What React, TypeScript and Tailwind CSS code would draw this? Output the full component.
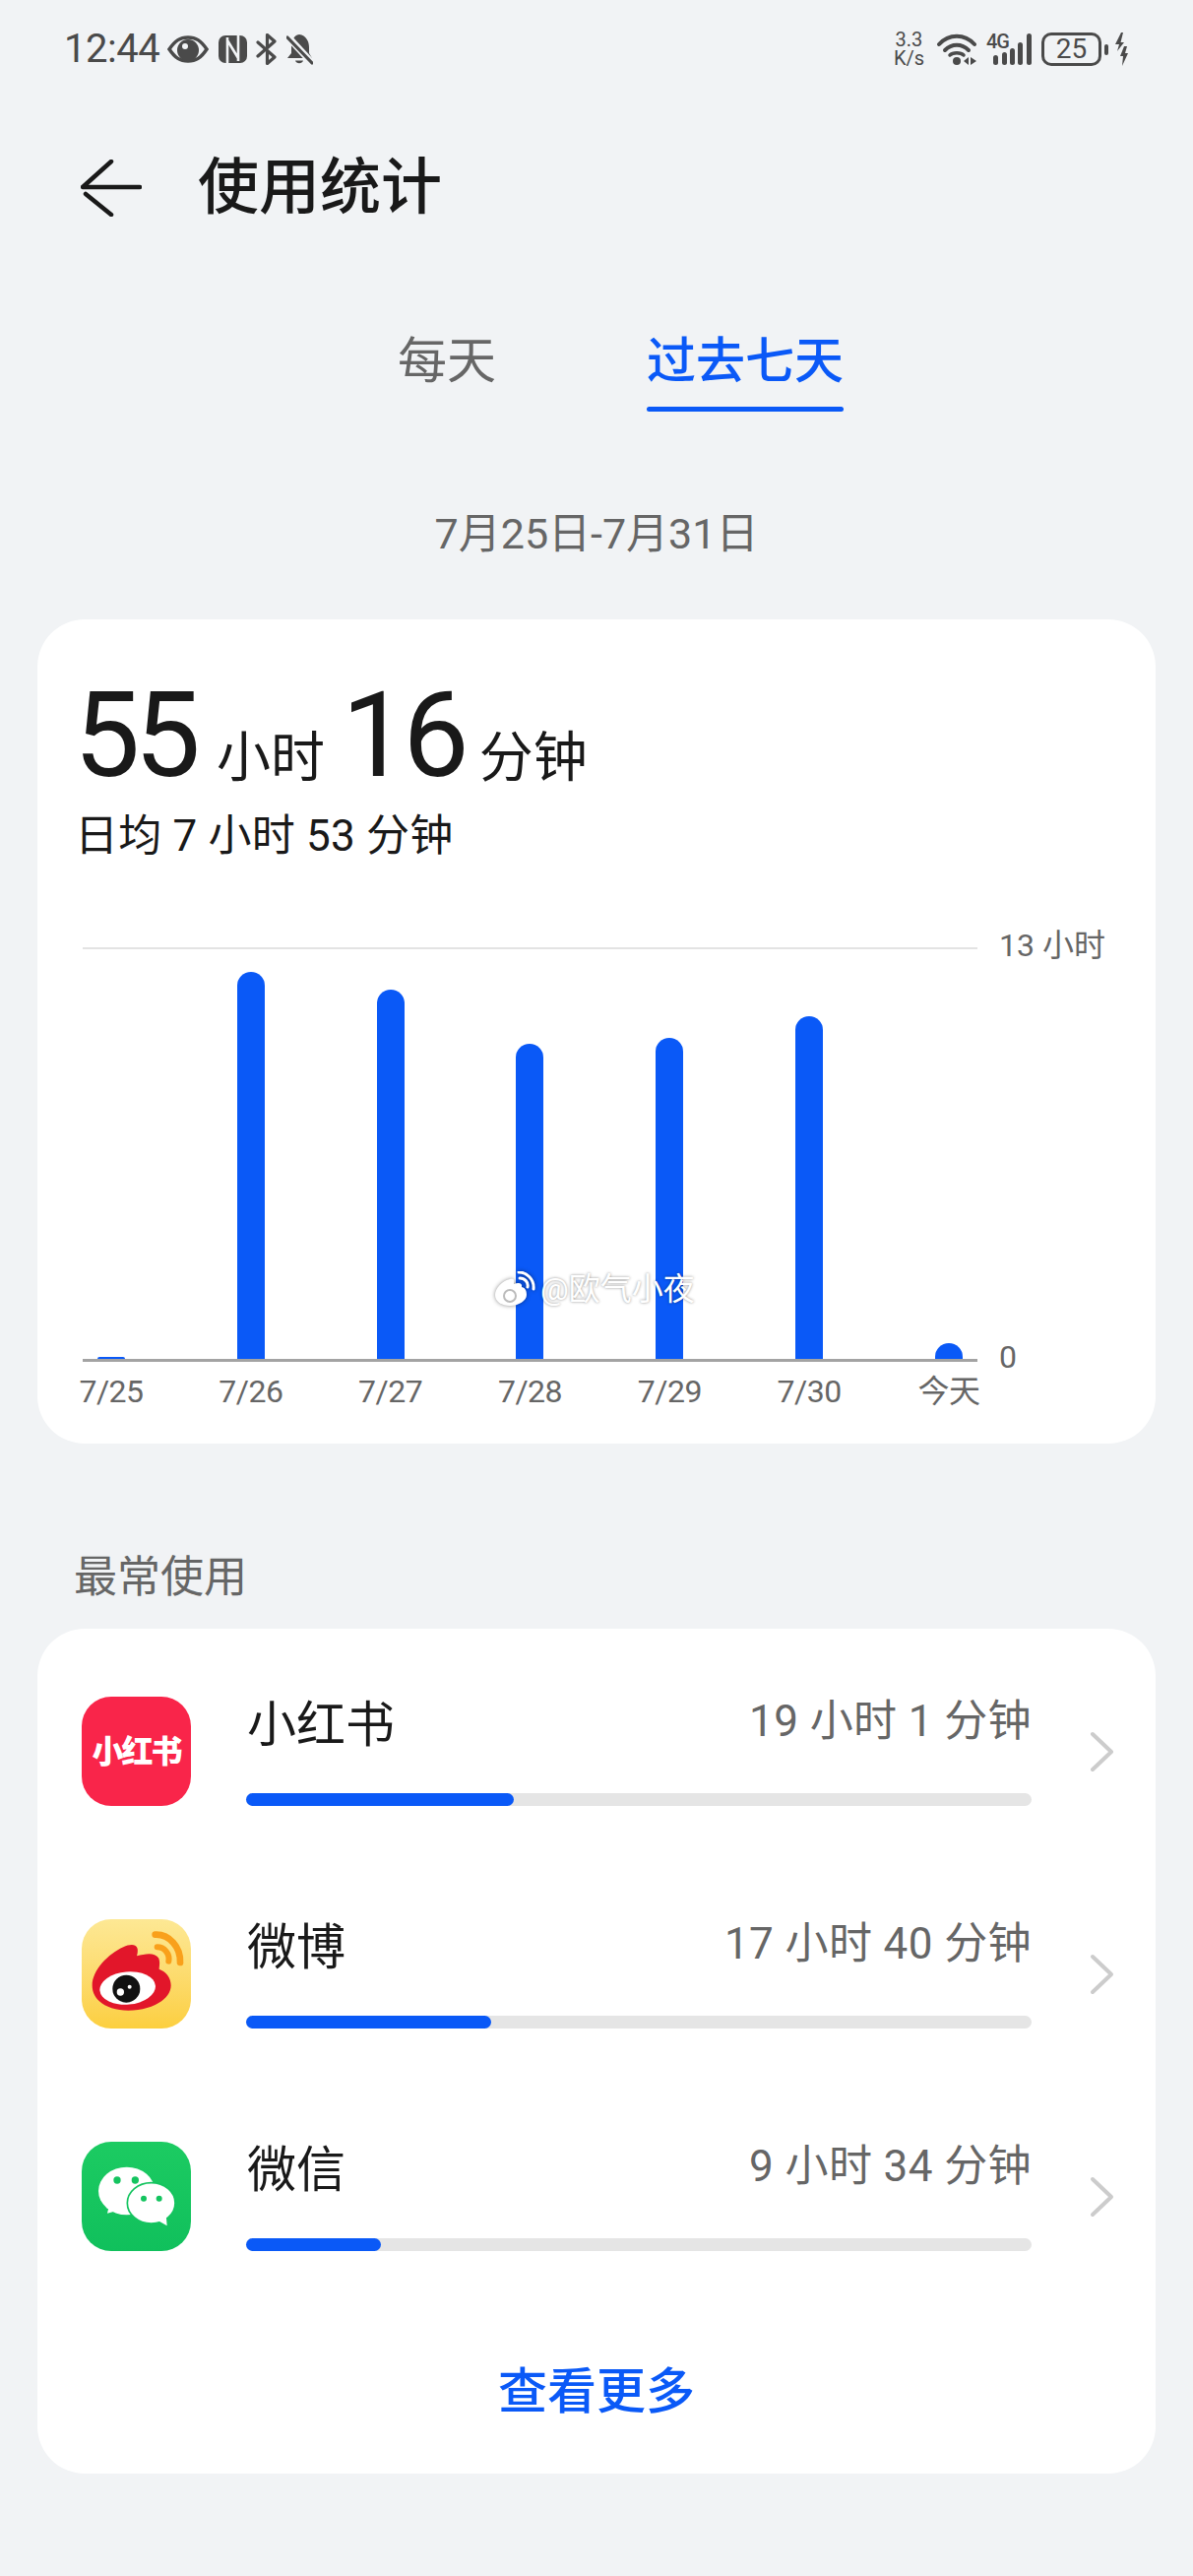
const bars = [
  { label: '7/25', height: 2 },
  { label: '7/26', height: 393 },
  { label: '7/27', height: 375 },
  { label: '7/28', height: 320 },
  { label: '7/29', height: 326 },
  { label: '7/30', height: 348 },
  { label: '今天', height: 16 },
];

const apps = [
  { name: '小红书', time: '19 小时 1 分钟', width: 272, icon: <RedBookIcon /> },
  { name: '微博', time: '17 小时 40 分钟', width: 249, icon: <WeiboIcon /> },
  { name: '微信', time: '9 小时 34 分钟', width: 137, icon: <WechatIcon /> },
];

function RedBookIcon() {
  return (
    <div className="w-[111px] h-[111px] rounded-[30px] bg-[#f9254a] flex items-center justify-center">
      <span className="text-[32px] leading-none font-black text-white tracking-[-2px]">小红书</span>
    </div>
  );
}

function WeiboIcon() {
  return (
    <div className="w-[111px] h-[111px] rounded-[30px] bg-linear-to-b from-[#fde894] to-[#fccf3e]">
      <svg viewBox="68 60 333 333" className="w-full h-full">
        <path
          d="M100 262C100 215 150 165 195 145C215 135 235 135 238 150C240 160 236 172 236 172C262 165 290 160 302 178C308 190 304 205 304 212C325 220 340 238 340 262C340 305 280 338 210 338C150 338 100 310 100 262Z"
          fill="#e2162a"
        />
        <ellipse cx="208" cy="270" rx="85" ry="50" transform="rotate(-5 208 270)" fill="#fff" />
        <circle cx="204" cy="272" r="42" fill="#111" />
        <circle cx="186" cy="282" r="11" fill="#fff" />
        <circle cx="214" cy="266" r="6" fill="#fff" />
        <path d="M292 107C335 105 370 145 368 192" fill="none" stroke="#f9a01b" strokeWidth="20" strokeLinecap="round" />
        <path d="M298 145C320 145 337 165 333 188" fill="none" stroke="#f9a01b" strokeWidth="18" strokeLinecap="round" />
      </svg>
    </div>
  );
}

function WechatIcon() {
  return (
    <div className="w-[111px] h-[111px] rounded-[30px] bg-linear-to-b from-[#1ccb62] to-[#10c05c]">
      <svg viewBox="68 78 333 333" className="w-full h-full">
        <ellipse cx="205" cy="228" rx="86" ry="73" fill="#fff" />
        <path d="M152 270L146 296L186 285Z" fill="#fff" />
        <circle cx="176" cy="195" r="11" fill="#14c45f" />
        <circle cx="231" cy="195" r="11" fill="#14c45f" />
        <ellipse cx="280" cy="265" rx="73" ry="62" fill="#fff" stroke="#14c45f" strokeWidth="5" />
        <path d="M300 318L328 334L325 300Z" fill="#fff" />
        <circle cx="257" cy="251" r="9" fill="#14c45f" />
        <circle cx="304" cy="251" r="9" fill="#14c45f" />
      </svg>
    </div>
  );
}

function StatusLeft() {
  return (
    <div className="flex items-center text-[#4a4a4a]">
      <span className="text-[40px] leading-none w-[105px] tracking-[-0.5px]">12:44</span>
      <svg viewBox="0 0 42 28" className="w-[42px] h-[28px]">
        <path d="M2 14C8 5 13 2 21 2C29 2 34 5 40 14C34 23 29 26 21 26C13 26 8 23 2 14Z" fill="none" stroke="currentColor" strokeWidth="3.5" />
        <circle cx="21" cy="15" r="11" fill="currentColor" />
        <circle cx="18" cy="11" r="3" fill="#f1f3f5" />
      </svg>
      <svg viewBox="0 0 29 28" className="w-[29px] h-[28px] ml-[10px]">
        <rect width="29" height="28" rx="7" fill="currentColor" />
        <path d="M9 28V2M9 5L20 23M20 0V26" fill="none" stroke="#f1f3f5" strokeWidth="2.6" />
      </svg>
      <svg viewBox="0 0 23 32" className="w-[23px] h-[32px] ml-[9px]">
        <path d="M2 9L19 24L11.5 30.5V19M11.5 13V1.5L19 8L2 23" fill="none" stroke="currentColor" strokeWidth="3.2" strokeLinecap="round" strokeLinejoin="round" />
      </svg>
      <svg viewBox="0 0 27 32" className="w-[27px] h-[32px] ml-[8px]">
        <path d="M13 1C7 2 5 8 5 14V20L1 25H26L23 20V14C23 8 20 2 13 1Z" fill="currentColor" />
        <path d="M9 27.5C10 31 16 31 17 27.5Z" fill="currentColor" />
        <path d="M1 3L27 31" stroke="#f1f3f5" strokeWidth="7" />
        <path d="M1 4L26 30" stroke="currentColor" strokeWidth="3.2" strokeLinecap="round" />
      </svg>
    </div>
  );
}

function StatusRight() {
  return (
    <div className="flex items-center text-[#4a4a4a]">
      <div className="w-[33px] flex flex-col items-center text-[20px] leading-[19px]">
        <span>3.3</span>
        <span>K/s</span>
      </div>
      <svg viewBox="0 0 40 32" className="w-[40px] h-[32px] ml-[12px]">
        <path d="M2 11C12 0 28 0 38 11" fill="none" stroke="currentColor" strokeWidth="4" strokeLinecap="round" />
        <path d="M8 17C15 10 25 10 32 17" fill="none" stroke="currentColor" strokeWidth="4" strokeLinecap="round" />
        <circle cx="20" cy="28" r="4" fill="currentColor" />
        <path d="M13 22C16 19 24 19 27 22" fill="none" stroke="currentColor" strokeWidth="3.5" strokeLinecap="round" />
        <path d="M32 24V32L27 28ZM34 24V32L40 28Z" fill="currentColor" />
      </svg>
      <div className="relative w-[46px] h-[32px] ml-[10px]">
        <span className="absolute left-0 top-[-1px] text-[20px] leading-[18px] font-medium tracking-[-1px]">4G</span>
        <svg viewBox="0 0 46 32" className="w-[46px] h-[32px]">
          <rect x="7" y="22" width="5" height="10" rx="2.5" fill="currentColor" />
          <rect x="16" y="19" width="5" height="13" rx="2.5" fill="currentColor" />
          <rect x="24" y="15" width="5" height="17" rx="2.5" fill="currentColor" />
          <rect x="32" y="9" width="5" height="23" rx="2.5" fill="currentColor" />
          <rect x="41" y="0" width="5" height="32" rx="2.5" fill="currentColor" />
        </svg>
      </div>
      <div className="w-[61px] h-[34px] ml-[10px] border-[3px] border-[#4a4a4a] rounded-[10px] flex items-center justify-center text-[28px] leading-none">
        25
      </div>
      <div className="w-[4px] h-[11px] ml-[3px] rounded-full bg-[#4a4a4a]" />
      <svg viewBox="0 0 14 34" className="w-[14px] h-[34px] ml-[6px]">
        <path d="M7 0L1 12H5L3 19L10 10H6.5L9 0Z" fill="currentColor" />
        <path d="M10 14L6 24H9L8 34L14 21H11L13 14Z" fill="currentColor" />
      </svg>
    </div>
  );
}

function Watermark() {
  return (
    <div className="absolute left-[418px] top-[329px] flex items-center gap-[5px] text-white">
      <svg viewBox="0 0 42 36" className="w-[42px] h-[36px] drop-shadow-[0_0_2px_rgba(0,0,0,0.45)]">
        <path d="M1 24C1 17 9 9 16 8C20 7 21 9 20 13C25 11 29 12 28 16C32 17 33 20 33 24C33 30 25 35 16 35C8 35 1 31 1 24Z" fill="#fff" />
        <circle cx="16" cy="25" r="6" fill="none" stroke="#bbb" strokeWidth="2" />
        <path d="M25 1C33 1 41 8 40 18M26 7C31 7 35 11 34 16" fill="none" stroke="#fff" strokeWidth="3" strokeLinecap="round" />
      </svg>
      <span className="text-[32px] leading-none [text-shadow:0_0_3px_rgba(0,0,0,0.45)]">@欧气小夜</span>
    </div>
  );
}

export default function App() {
  return (
    <div className="w-[1212px] h-[2616px] bg-[#f1f3f5] text-[#191919] font-['Roboto','Noto_Sans_CJK_SC',sans-serif] overflow-hidden">
      <div className="h-[100px] pl-[65px] pr-[66px] flex items-center justify-between">
        <StatusLeft />
        <StatusRight />
      </div>

      <div className="h-[182px] pl-[82px] flex items-center gap-[57px]">
        <svg viewBox="0 0 62 58" className="w-[62px] h-[58px]">
          <path d="M31 2L2 28H60M5 35L31 56" fill="none" stroke="#191919" strokeWidth="4.5" strokeLinecap="round" strokeLinejoin="round" />
        </svg>
        <h1 className="text-[62px] leading-none font-medium">使用统计</h1>
      </div>

      <div className="pt-[60px] pl-[404px] flex gap-[153px]">
        <div className="text-[50px] leading-[50px] text-[#666666]">每天</div>
        <div>
          <div className="text-[50px] leading-[50px] font-medium text-[#0a59f7]">过去七天</div>
          <div className="h-[5px] mt-[21px] rounded-full bg-[#0a59f7]" />
        </div>
      </div>

      <div className="mt-[99px] text-center text-[43px] leading-[50px] text-[#666666]">7月25日-7月31日</div>

      <div className="mt-[62px] mx-[38px] h-[837px] rounded-[48px] bg-white pt-[58px] pl-[37px]">
        <div className="flex items-baseline leading-none">
          <span className="text-[120px] tracking-[-6px]">55</span>
          <span className="text-[55px] ml-[22px]">小时</span>
          <span className="text-[120px] ml-[17px] tracking-[-5px]">16</span>
          <span className="text-[55px] ml-[15px]">分钟</span>
        </div>
        <div className="mt-[20px] ml-[1px] text-[44px] tracking-[0.2px] leading-[44px]">日均 7 小时 53 分钟</div>

        <div className="mt-[91px] ml-[9px] flex">
          <div className="relative w-[909px]">
            <div className="h-[421px] px-[15px] flex items-end justify-between border-t-2 border-b-[3px] border-t-[#e3e3e3] border-b-[#a3a3a3]">
              {bars.map(bar => (
                <div
                  key={bar.label}
                  className="w-[28px] bg-[#0a59f7] rounded-t-[14px]"
                  style={{ height: bar.height }}
                />
              ))}
            </div>
            <div className="mt-[14px] px-[15px] flex justify-between">
              {bars.map(bar => (
                <div key={bar.label} className="w-[28px] flex justify-center whitespace-nowrap text-[32px] leading-[32px] tracking-[-0.5px] text-[#666666]">
                  {bar.label}
                </div>
              ))}
            </div>
            <Watermark />
          </div>
          <div className="ml-[22px] -mt-[18px] h-[450px] flex flex-col justify-between text-[32px] leading-[32px] text-[#666666]">
            <span>13 小时</span>
            <span>0</span>
          </div>
        </div>
      </div>

      <div className="mt-[114px] ml-[75px] text-[44px] leading-[44px] text-[#666666]">最常使用</div>

      <div className="mt-[30px] mx-[38px] h-[858px] rounded-[48px] bg-white pt-[69px]">
        <div className="flex flex-col gap-[115px]">
          {apps.map(app => (
            <div key={app.name} className="h-[111px] pl-[45px] flex">
              {app.icon}
              <div className="ml-[56px] w-[798px]">
                <div className="h-[56px] flex items-center justify-between">
                  <span className="text-[50px] leading-[56px] pl-[1px] pt-[1px]">{app.name}</span>
                  <span className="text-[44px] leading-[50px] tracking-[0.4px] -mt-[6px] text-[#666666]">{app.time}</span>
                </div>
                <div className="mt-[42px] h-[13px] rounded-full bg-[#e5e5e5]">
                  <div className="h-full rounded-full bg-[#0a59f7]" style={{ width: app.width }} />
                </div>
              </div>
              <svg viewBox="0 0 25 42" className="w-[25px] h-[42px] ml-[59px] mt-[35px]">
                <path d="M3 3L22 21L3 39" fill="none" stroke="#cccccc" strokeWidth="4" strokeLinecap="round" strokeLinejoin="round" />
              </svg>
            </div>
          ))}
        </div>
        <div className="mt-[113px] text-center text-[50px] leading-[60px] font-medium text-[#0a59f7]">查看更多</div>
      </div>
    </div>
  );
}
